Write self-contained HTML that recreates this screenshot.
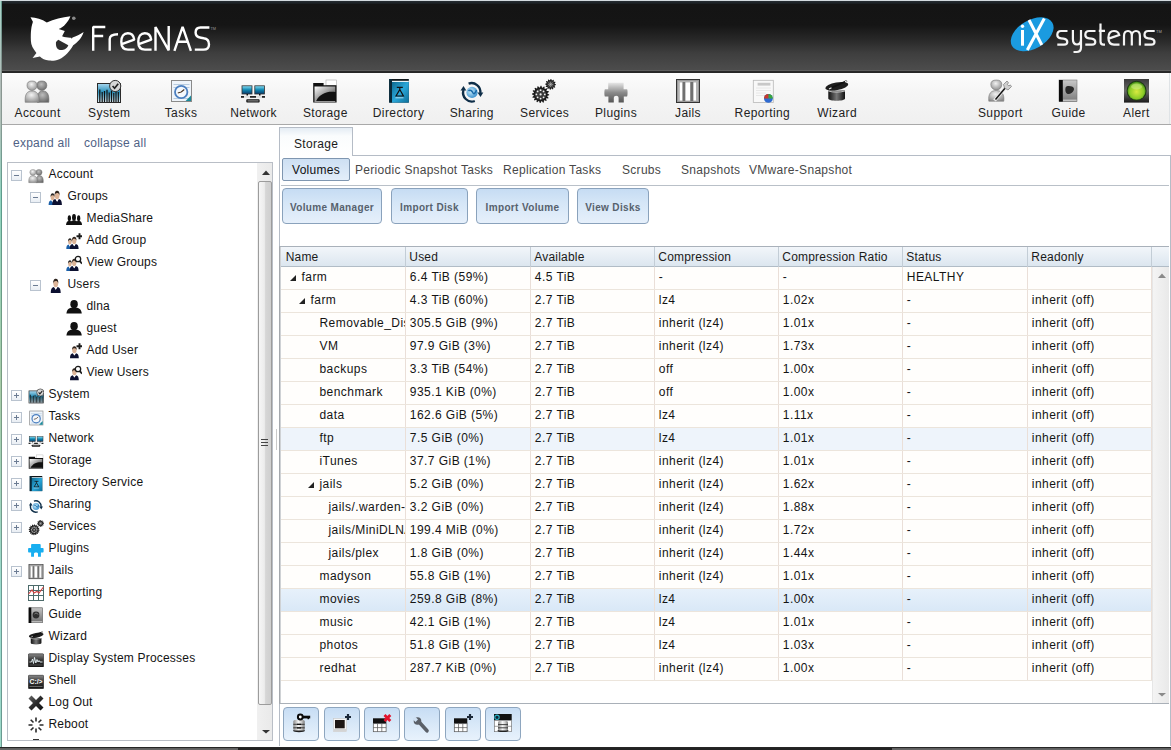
<!DOCTYPE html><html><head><meta charset="utf-8"><style>
*{margin:0;padding:0;box-sizing:border-box}
html,body{width:1171px;height:750px;overflow:hidden}
body{position:relative;background:#fff;font-family:"Liberation Sans",sans-serif;font-size:12px;color:#1a1a1a}
.a{position:absolute}
.t{position:absolute;white-space:nowrap;line-height:14px}
#lstrip{left:0;top:0;width:1px;height:750px;background:linear-gradient(#a8d4c8 0,#b0bcb8 80px,#b0c0b8 120px,#90d4c0 200px,#a8cca8 390px,#9cdcd0 600px,#9cd8c8 750px)}
#lstrip2{left:1px;top:0;width:1px;height:750px;background:linear-gradient(#6a9a90 0,#8a9490 80px,#8a9a94 120px,#5c9c8c 200px,#7a9c80 390px,#6a9c94 600px,#6a9a90 750px)}
#topline{left:0;top:0;width:1171px;height:1px;background:#d3dade}
#hdr{left:2px;top:1px;width:1169px;height:72px;background:linear-gradient(#262d33 0,#1a1e21 2.5px,#141414 3.5px,#151515 24px,#2a2a2a 40px,#3e3e3e 52px,#4a4a4a 66px,#4c4c4c 69px,#5e5e5e 69.5px,#2a2a2a 70px,#262626 72px)}
#tb{left:2px;top:73px;width:1169px;height:52px;background:linear-gradient(#fcfcfc 0,#f5f5f5 20px,#f0f0f0 51px);border-bottom:1px solid #a9a9a9}
#tbr{left:1169px;top:73px;width:1px;height:51px;background:#dfe3e6}
.tbl{top:106px;font-size:12px;letter-spacing:0.4px;color:#222;text-align:center;width:100px;margin-left:-50px}
#bstrip{left:0;top:747px;width:1171px;height:3px;background:linear-gradient(#262626 0,#262626 1px,#5c5c5c 1px,#6a6a6a 3px)}
#bstrip2{left:238px;top:748px;width:654px;height:2px;background:#222}
#rstrip{display:none}
.lnk{top:136px;color:#4f6285;letter-spacing:0.25px}
#tree{left:7px;top:162px;width:266px;height:579px;border:1px solid #b9bec6;overflow:hidden;background:#fff}
.ti{position:absolute;height:22px;white-space:nowrap}
.ti .lb{position:absolute;top:3px;line-height:14px;letter-spacing:0.2px;color:#141414}
.xb{position:absolute;top:6px;width:11px;height:11px;border:1px solid #b9c3cf;background:linear-gradient(#fff,#e9eef4)}
.xb:before{content:"";position:absolute;left:2px;top:4px;width:5px;height:1px;background:#6c7c93}
.xb.p:after{content:"";position:absolute;left:4px;top:2px;width:1px;height:5px;background:#6c7c93}
.ic{position:absolute;top:4px;width:16px;height:16px}
#tsb{left:249px;top:0px;width:16px;height:577px;background:linear-gradient(90deg,#f0f0f0,#e9e9e9)}
#thumb{left:250px;top:18px;width:14px;height:524px;border:1px solid #9c9c9c;border-radius:2px;background:linear-gradient(90deg,#f6f6f6 0,#ececec 45%,#d6d6d6 55%,#cfcfcf 100%)}
#main{left:279px;top:155px;width:892px;height:591px;border-left:1px solid #b5bcc6;border-top:1px solid #b5bcc6;border-right:1px solid #b5bcc6}
#tab{left:279px;top:127px;width:74px;height:29px;border:1px solid #b5bcc6;border-bottom:none;background:linear-gradient(#e4ecf4 0,#fafcfd 8px,#fff 28px)}
.sub{top:163px;color:#484848;letter-spacing:0.3px}
#volbtn{left:282px;top:158px;width:68px;height:23px;border:1px solid #7f96b0;border-radius:2px;background:linear-gradient(#cddff2,#e3eefa)}
.btn{position:absolute;top:188px;height:36px;border:1px solid #8aa2bc;border-radius:4px;background:linear-gradient(#c6dcf3 0,#d5e6f7 40%,#e6f0fb 100%);font-weight:bold;font-size:10px;color:#56616d;text-align:center;line-height:38px;letter-spacing:0.35px}
#grid{left:279px;top:246px;width:890px;height:458px;border-top:1px solid #a9b1ba;border-bottom:1px solid #a9b0b8;border-left:1px solid #a4a8ad}
#gl2{left:0;top:0;width:1px;height:456px;background:#cfd2d5}
#ghdr{left:1px;top:0;width:888px;height:20px;background:linear-gradient(#f2f6fa,#dce6ef);border-bottom:1px solid #b1bcc6}
.hc{position:absolute;top:0;height:20px;border-right:1px solid #c3cdd6}
.hc span{white-space:nowrap;position:absolute;left:3.3px;top:3px;line-height:14px;letter-spacing:0.2px;color:#1a1a1a}
.row{position:absolute;left:1px;width:871px;height:23px;border-bottom:1px solid #ece5dc;background:#fffefc}
.cell{position:absolute;top:0;height:22px;border-right:1px solid #eadfd8}
.cell span{white-space:nowrap;position:absolute;left:3.8px;top:3px;line-height:14px;letter-spacing:0.45px;color:#141414}
.bb{position:absolute;top:707px;width:36px;height:34px;border:1px solid #8ea6bf;border-radius:4px;background:linear-gradient(#c7ddf4 0,#d8e8f8 50%,#e8f2fc 100%)}
</style></head><body>
<div id="lstrip" class="a"></div><div id="lstrip2" class="a"></div><div id="hdr" class="a"></div><div id="topline" class="a"></div>
<svg class="a" style="left:0;top:0" width="230" height="72" viewBox="0 0 230 72">
<path fill="#fff" d="M30.5,17.2 C36,17.5 42,19 46.8,22.4 C54,19.5 62,17 70.4,16.2 C68,22 64,27 58.6,29 L64.8,31.1 L62.1,36.3 C65,37.5 68,37.8 71.1,37.7 L71.8,38.8 L72.5,37.5 C76,36.5 80,34.5 83.6,32.1 C82,38 77,43 73.2,45.3 C70,51 65,57 59.3,59.2 C55,60.8 52,60.8 48.9,60.5 C45,60 42,58.5 39.9,56.4 L32.6,58.1 L36.4,52.9 C33,49 31,45 30.9,41.1 C30.7,36 30.8,32 31.2,29.3 C31.5,26 32.5,23.5 32.9,21.7 Z"/>
<path fill="#2e2e2e" d="M56,42 L58.2,39.7 L68.3,45.3 C67,49 64,50 61,50 C57.5,50 55.5,47.5 56,42Z"/>
<circle cx="73.8" cy="18.2" r="1.8" fill="#8a8a8a"/>
<g fill="none" stroke="#fff" stroke-width="2.4" stroke-linejoin="bevel">
<path d="M93.2,50.8 V27 H105.3 M93.2,36 H103.2"/>
<path d="M109.7,50.8 V39 C109.7,35.5 112,34.2 118,34.2"/>
<path d="M121.8,44.2 L134.2,39.6 C133.6,35.2 131,33.2 127.8,33.2 C123.8,33.2 121.3,36.5 121.3,41.8 C121.3,47.3 124,49.6 128,49.6 H134.6"/>
<path d="M138.8,44.2 L151.2,39.6 C150.6,35.2 148,33.2 144.8,33.2 C140.8,33.2 138.3,36.5 138.3,41.8 C138.3,47.3 141,49.6 145,49.6 H151.6"/>
<path d="M155.5,50.8 V27 L168.7,50.3 V26"/>
<path d="M174.4,50.8 L182.6,26.8 L190.9,50.8 M177.6,41.8 H187.6"/>
<path d="M209.4,27.5 H200.5 C197,27.5 195.6,30 195.6,32.6 C195.6,35.6 197.6,37.4 201,37.8 L203.8,38.2 C207.4,38.7 209,41.4 209,44.4 C209,47.6 206.8,49.6 203.4,49.6 H194.8"/>
</g>
<text x="210.5" y="29.5" font-size="3.8" fill="#999" font-family="Liberation Sans">TM</text>
</svg>
<svg class="a" style="left:990px;top:0" width="181" height="72" viewBox="990 0 181 72">
<ellipse cx="1032.2" cy="34.3" rx="23.3" ry="14.3" transform="rotate(-30 1032.2 34.3)" fill="#1b9be0"/>
<g stroke="#fff" stroke-width="3" fill="none"><path d="M1022.5,30 V45.7"/><path d="M1029,20 L1041.8,45 M1044.3,18.5 L1027.3,50"/></g>
<circle cx="1022.5" cy="26.3" r="1.7" fill="#fff"/>
<g fill="none" stroke="#f4f4f4" stroke-width="2.2">
<path d="M1067.5,31 H1061 C1058.5,31 1057.3,33 1057.3,35 C1057.3,37 1058.8,38 1061,38.3 L1063.5,38.6 C1066,38.9 1067.3,40.5 1067.3,42 C1067.3,43.8 1066,44.6 1064,44.6 H1057.3"/>
<path d="M1072.9,30 V39 C1072.9,42.5 1074.5,44.5 1077,44.5 C1079.5,44.5 1081,42.5 1081,39 V30 M1081,39 V47.5 C1081,50.5 1079,52 1076.5,52 H1073.5"/>
<path transform="translate(28 0)" d="M1067.5,31 H1061 C1058.5,31 1057.3,33 1057.3,35 C1057.3,37 1058.8,38 1061,38.3 L1063.5,38.6 C1066,38.9 1067.3,40.5 1067.3,42 C1067.3,43.8 1066,44.6 1064,44.6 H1057.3"/>
<path d="M1100.5,23.5 V41.5 C1100.5,43.8 1101.8,44.6 1103.5,44.6 H1105 M1098.8,30.8 H1105"/>
<path d="M1108.6,38.6 L1119.2,35 C1118.6,32.3 1116.5,31 1114,31 C1110.5,31 1108.4,33.5 1108.4,37.8 C1108.4,42.5 1110.5,44.6 1114,44.6 H1119.5"/>
<path d="M1124,45.6 V36 C1124,32.5 1126,31 1128,31 C1130.5,31 1131.8,32.5 1131.8,36 V45.6 M1131.8,36 C1131.8,32.5 1134,31 1136,31 C1138.5,31 1139.9,32.5 1139.9,36 V45.6"/>
<path transform="translate(87.2 0)" d="M1067.5,31 H1061 C1058.5,31 1057.3,33 1057.3,35 C1057.3,37 1058.8,38 1061,38.3 L1063.5,38.6 C1066,38.9 1067.3,40.5 1067.3,42 C1067.3,43.8 1066,44.6 1064,44.6 H1057.3"/>
</g>
<text x="1156" y="33" font-size="4" fill="#aaa" font-family="Liberation Sans">TM</text>
</svg>
<div id="tb" class="a"></div><div id="tbr" class="a"></div>
<svg class="a" style="left:0;top:72px" width="1171" height="53" viewBox="0 72 1171 53"><defs><radialGradient id="gAL" cx="0.45" cy="0.35" r="0.7"><stop offset="0" stop-color="#f4f4f4"/><stop offset="1" stop-color="#8e8e8e"/></radialGradient>
<radialGradient id="gAR" cx="0.45" cy="0.35" r="0.7"><stop offset="0" stop-color="#bdbdbd"/><stop offset="1" stop-color="#666"/></radialGradient></defs>
<path d="M37.3,102.3 C36.6,94 38.5,91 43,91 C47,91 49.4,94 48.8,102.3 Z" fill="url(#gAR)" stroke="#6a6a6a" stroke-width="0.6"/>
<path d="M36.8,85.5 C36.8,82.3 38.5,81 41.8,81 C45.1,81 46.8,82.3 46.8,85.5 A5,5 0 0 1 36.8,85.5Z" fill="url(#gAR)" stroke="#6a6a6a" stroke-width="0.6"/>
<path d="M25.2,102.3 C24.6,94 27,91 32,91 C37,91 39.4,94 39.2,102.3 Z" fill="url(#gAL)" stroke="#777" stroke-width="0.6"/>
<path d="M27,85.5 C27,82.3 28.7,81 32,81 C35.3,81 37,82.3 37,85.5 A5,5 0 0 1 27,85.5Z" fill="url(#gAL)" stroke="#777" stroke-width="0.6"/><defs><linearGradient id="gSky" x1="0" y1="0" x2="0" y2="1"><stop offset="0" stop-color="#a9d8f0"/><stop offset="0.45" stop-color="#2a8fb8"/><stop offset="1" stop-color="#e2f0f6"/></linearGradient></defs>
<rect x="97.5" y="83.5" width="23" height="19" fill="url(#gSky)" stroke="#2a2a2a"/>
<g stroke="#111" stroke-width="1.2"><path d="M99.8,102 V89.5 M102.2,102 V92 M104.5,102 V91 M107,102 V89.8 M109.2,102 V92.5 M111.5,102 V90.5 M113.8,102 V93 M116,102 V91.5 M118.3,102 V92"/></g>
<circle cx="115.2" cy="86" r="5.6" fill="#d6d6d6" stroke="#333" stroke-width="1"/><path d="M112.6,86 L114.6,88.2 L118.2,83.8" stroke="#222" stroke-width="1.7" fill="none"/><rect x="171.5" y="80.5" width="20" height="21" fill="#eef4fa" stroke="#8a8a8a"/><path d="M173.5,84.5 H189.5 M173.5,87.5 H189.5 M173.5,98.5 H189.5" stroke="#a8c0d8" stroke-width="0.8"/>
<circle cx="181.2" cy="92" r="6.2" fill="#f4f8fc" stroke="#4b7fc0" stroke-width="1.8"/><path d="M181.2,92 L184.3,89.5 M181.2,92 L177.8,93" stroke="#4a3626" stroke-width="1.1"/>
<path d="M185.6,101 L191,95.6 V101Z" fill="#1a8a9a"/><defs><linearGradient id="gScr" x1="0" y1="0" x2="0" y2="1"><stop offset="0" stop-color="#8ae0f8"/><stop offset="0.5" stop-color="#0e86b0"/><stop offset="1" stop-color="#0a3a6a"/></linearGradient></defs>
<rect x="242" y="85.8" width="10" height="8.2" fill="url(#gScr)" stroke="#333" stroke-width="0.8"/><rect x="254.8" y="85.8" width="9.6" height="8.2" fill="url(#gScr)" stroke="#333" stroke-width="0.8"/>
<path d="M246.5,94 H248 V95.5 H246.5Z M259,94 H260.5 V95.5 H259Z" fill="#111"/>
<rect x="241" y="96" width="24" height="1.8" fill="#ddd"/><path d="M241,96.9 H244 M250,96.9 H256 M262,96.9 H265" stroke="#222" stroke-width="1.8"/>
<rect x="246.3" y="99.2" width="13.3" height="3.3" rx="0.8" fill="#111"/><rect x="247.5" y="100.3" width="11" height="1.2" fill="#888"/><defs><linearGradient id="gFold" x1="0" y1="0" x2="1" y2="1"><stop offset="0" stop-color="#fff"/><stop offset="0.5" stop-color="#9a9a9a"/><stop offset="1" stop-color="#222"/></linearGradient></defs>
<rect x="326" y="80" width="10.4" height="5.6" fill="#fff" stroke="#aaa" stroke-width="0.6"/>
<path d="M313.2,83 H323.6 V85.2 H336.6 V102.6 H313.2Z" fill="#111"/>
<path d="M314.5,86.5 H335.3 V92 C328,91 320,93 316,101.3 H314.5Z" fill="url(#gFold)"/>
<rect x="314.5" y="101" width="20.8" height="0.8" fill="#bbb"/><defs><linearGradient id="gBook" x1="0" y1="0" x2="1" y2="1"><stop offset="0" stop-color="#0e6a90"/><stop offset="0.5" stop-color="#2aa6d8"/><stop offset="1" stop-color="#0f6f98"/></linearGradient></defs>
<rect x="389.2" y="79" width="19.6" height="23.6" fill="#0b2e40"/><rect x="391" y="79.2" width="17.4" height="1.6" fill="#111"/><rect x="392" y="80.8" width="16.8" height="1.2" fill="#e8f4f8"/>
<rect x="392" y="82" width="16.8" height="20.6" fill="url(#gBook)"/><rect x="389.2" y="79" width="2.8" height="23.6" fill="#082838"/>
<path d="M396.8,87.4 H402.8 M399.8,87.4 V89.5 L396,96 H403.4 L399.8,89.5" fill="none" stroke="#111" stroke-width="1.2"/><path d="M395.5,97.8 H403.5" stroke="#cdeaf5" stroke-width="0.8"/><defs><radialGradient id="gGlobe" cx="0.4" cy="0.4" r="0.7"><stop offset="0" stop-color="#c8ecfb"/><stop offset="1" stop-color="#2a86c8"/></radialGradient></defs>
<circle cx="472" cy="92.4" r="5.6" fill="url(#gGlobe)"/><path d="M468.5,91 C470,89 472,91 473,93 C474,95 476,92 476.5,90" stroke="#1a6aa8" stroke-width="1.5" fill="none"/>
<path d="M468.6,83.6 A8.8,8.8 0 0 1 480.3,93" stroke="#0e2e48" stroke-width="2.3" fill="none"/><path d="M477.5,92.5 L480.5,97 L483.3,92.5Z" fill="#0e2e48"/>
<path d="M474.8,101 A8.8,8.8 0 0 1 463.5,90" stroke="#0e2e48" stroke-width="2.3" fill="none"/><path d="M460.5,90.5 L463.5,86 L466.3,90.5Z" fill="#0e2e48"/><path d="M549.20,94.40 L549.16,95.24 L547.47,95.77 L547.30,96.43 L548.55,97.69 L548.18,98.45 L546.42,98.29 L546.01,98.84 L546.68,100.48 L546.06,101.05 L544.49,100.22 L543.90,100.57 L543.89,102.35 L543.10,102.63 L541.97,101.27 L541.29,101.37 L540.60,103.00 L539.76,102.96 L539.23,101.27 L538.57,101.10 L537.31,102.35 L536.55,101.98 L536.71,100.22 L536.16,99.81 L534.52,100.48 L533.95,99.86 L534.78,98.29 L534.43,97.70 L532.65,97.69 L532.37,96.90 L533.73,95.77 L533.63,95.09 L532.00,94.40 L532.04,93.56 L533.73,93.03 L533.90,92.37 L532.65,91.11 L533.02,90.35 L534.78,90.51 L535.19,89.96 L534.52,88.32 L535.14,87.75 L536.71,88.58 L537.30,88.23 L537.31,86.45 L538.10,86.17 L539.23,87.53 L539.91,87.43 L540.60,85.80 L541.44,85.84 L541.97,87.53 L542.63,87.70 L543.89,86.45 L544.65,86.82 L544.49,88.58 L545.04,88.99 L546.68,88.32 L547.25,88.94 L546.42,90.51 L546.77,91.10 L548.55,91.11 L548.83,91.90 L547.47,93.03 L547.57,93.71Z" fill="#1a1a1a"/><circle cx="540.6" cy="94.4" r="5.6" fill="#3a3a3a"/><circle cx="540.6" cy="94.4" r="1.1" fill="#eee"/><circle cx="544.80" cy="94.40" r="0.9" fill="#eee"/><circle cx="543.57" cy="97.37" r="0.9" fill="#eee"/><circle cx="540.60" cy="98.60" r="0.9" fill="#eee"/><circle cx="537.63" cy="97.37" r="0.9" fill="#eee"/><circle cx="536.40" cy="94.41" r="0.9" fill="#eee"/><circle cx="537.62" cy="91.44" r="0.9" fill="#eee"/><circle cx="540.59" cy="90.20" r="0.9" fill="#eee"/><circle cx="543.56" cy="91.42" r="0.9" fill="#eee"/><path d="M556.00,84.40 L555.95,85.10 L554.66,85.49 L554.48,86.01 L555.28,87.10 L554.88,87.69 L553.57,87.37 L553.16,87.73 L553.30,89.08 L552.67,89.39 L551.69,88.46 L551.15,88.56 L550.60,89.80 L549.90,89.75 L549.51,88.46 L548.99,88.28 L547.90,89.08 L547.31,88.68 L547.63,87.37 L547.27,86.96 L545.92,87.10 L545.61,86.47 L546.54,85.49 L546.44,84.95 L545.20,84.40 L545.25,83.70 L546.54,83.31 L546.72,82.79 L545.92,81.70 L546.32,81.11 L547.63,81.43 L548.04,81.07 L547.90,79.72 L548.53,79.41 L549.51,80.34 L550.05,80.24 L550.60,79.00 L551.30,79.05 L551.69,80.34 L552.21,80.52 L553.30,79.72 L553.89,80.12 L553.57,81.43 L553.93,81.84 L555.28,81.70 L555.59,82.33 L554.66,83.31 L554.76,83.85Z" fill="#1a1a1a"/><circle cx="550.6" cy="84.4" r="3.4" fill="#3a3a3a"/><path d="M548,84.4 H553.2 M550.6,81.8 V87 M548.8,82.6 L552.4,86.2 M548.8,86.2 L552.4,82.6" stroke="#bbb" stroke-width="0.6"/><defs><linearGradient id="gPlug" x1="0" y1="0" x2="0" y2="1"><stop offset="0" stop-color="#e6e6e6"/><stop offset="0.5" stop-color="#8a8a8a"/><stop offset="1" stop-color="#555"/></linearGradient></defs>
<path d="M608.2,82.8 H623.6 V89.2 H627 C627.8,89.2 627.8,96.4 627,96.4 H623.8 V102.6 H618.6 V98 C618.6,95 613.8,95 613.8,98 V102.6 H608.4 V96.4 H605 C604.2,96.4 604.2,89.2 605,89.2 H608.2Z" fill="url(#gPlug)"/><rect x="676.5" y="79.5" width="23" height="23" fill="#9a9a9a" stroke="#333"/><rect x="678" y="81" width="20" height="20" fill="#b4b4b4"/>
<g fill="#fff"><rect x="679.8" y="82.5" width="2.6" height="18"/><rect x="685.4" y="82.5" width="4.8" height="18"/><rect x="693.4" y="82.5" width="2.6" height="18"/></g>
<g fill="#707070"><rect x="682.6" y="82" width="2.6" height="19"/><rect x="690.4" y="82" width="2.8" height="19"/></g><rect x="753.3" y="80.3" width="20" height="22.2" fill="#f8f8f8" stroke="#b8b8b8" stroke-width="0.8"/><rect x="757.6" y="82.8" width="12.8" height="2.8" fill="#c8c8c8"/>
<path d="M756,88 H771 M756,90.5 H771 M756,93 H766 M756,95.5 H764" stroke="#e2e2e2" stroke-width="0.8"/>
<circle cx="768.4" cy="98.4" r="4.4" fill="#2f6ad0"/><path d="M768.4,98.4 H772.8 A4.4,4.4 0 0 0 768.4,94Z" fill="#3aa63a"/><path d="M768.4,98.4 V94 A4.4,4.4 0 0 0 764,98.4Z" fill="#c83a2a"/><defs><linearGradient id="gHat" x1="0" x2="1"><stop offset="0" stop-color="#111"/><stop offset="0.5" stop-color="#777"/><stop offset="1" stop-color="#111"/></linearGradient></defs>
<path d="M828.3,90.5 V98.5 C828.3,101.5 845,101.5 845,98.5 V90.5Z" fill="url(#gHat)"/><path d="M828.3,91 C833,92.5 840,92.5 845,91" stroke="#ccc" stroke-width="0.9" fill="none"/>
<ellipse cx="836.8" cy="86.3" rx="11.6" ry="3.8" transform="rotate(-10 836.8 86.3)" fill="#1e1e1e"/>
<path d="M829,89 L847,80.8" stroke="#111" stroke-width="1.8"/><path d="M829,89 L831.5,87.8 M845,81.7 L847.2,80.7" stroke="#eee" stroke-width="1.2"/><defs><radialGradient id="gSup" cx="0.45" cy="0.35" r="0.7"><stop offset="0" stop-color="#f2f2f2"/><stop offset="1" stop-color="#8a8a8a"/></radialGradient></defs>
<path d="M988.8,101.2 C988,93.5 991,90.5 996.3,90.5 C1001.5,90.5 1004.5,93.5 1003.8,101.2Z" fill="url(#gSup)" stroke="#777" stroke-width="0.6"/>
<path d="M990.8,84.5 C990.8,81.3 992.8,80 996.3,80 C999.8,80 1001.8,81.3 1001.8,84.5 A5.5,5.5 0 0 1 990.8,84.5Z" fill="url(#gSup)" stroke="#777" stroke-width="0.6"/>
<path d="M994.5,100.5 L1006,87" stroke="#e8e8e8" stroke-width="3.4"/><path d="M995.5,99.5 L1005,88.2" stroke="#111" stroke-width="1.4"/>
<path d="M1004.5,88 L1003.5,84.5 L1007,81 L1008.5,82.8 L1007.3,84.5 L1009,86 L1010.2,84.8 L1011.5,86.5 L1008,90Z" fill="#cfcfcf" stroke="#666" stroke-width="0.6"/><defs><linearGradient id="gGd" x1="0" y1="0" x2="0" y2="1"><stop offset="0" stop-color="#c8c8c8"/><stop offset="1" stop-color="#7a7a7a"/></linearGradient></defs>
<rect x="1059" y="80" width="18" height="21.6" fill="url(#gGd)" stroke="#777" stroke-width="0.6"/><rect x="1059" y="80" width="3.8" height="21.6" fill="#0a0a0a"/>
<path d="M1063,100.2 H1076.6" stroke="#eee" stroke-width="0.9"/>
<path d="M1065.6,87.5 C1066.5,85.5 1070,85.8 1072,86.5 C1074,87 1074.5,89 1073.5,90.8 C1072.5,93 1070,94.5 1067.6,94 C1065.5,93.3 1065,90 1065.6,87.5Z" fill="#2a2a2a"/><defs><linearGradient id="gAb" x1="0" y1="0" x2="0" y2="1"><stop offset="0" stop-color="#3a3a3a"/><stop offset="0.5" stop-color="#6a6a6a"/><stop offset="1" stop-color="#1a1a1a"/></linearGradient>
<radialGradient id="gAg" cx="0.5" cy="0.55" r="0.55"><stop offset="0" stop-color="#d8ea40"/><stop offset="0.7" stop-color="#8ccc28"/><stop offset="1" stop-color="#3e8a18"/></radialGradient></defs>
<rect x="1124" y="79" width="25" height="23.6" fill="url(#gAb)"/><circle cx="1136.6" cy="90.8" r="10" fill="#1e3a10"/><circle cx="1136.6" cy="90.8" r="9" fill="url(#gAg)"/><ellipse cx="1136.6" cy="86.5" rx="5.5" ry="3" fill="#d8f0a0" opacity="0.45"/></svg>
<div class="t tbl" style="left:37.6px">Account</div>
<div class="t tbl" style="left:109.3px">System</div>
<div class="t tbl" style="left:181px">Tasks</div>
<div class="t tbl" style="left:253.6px">Network</div>
<div class="t tbl" style="left:325.3px">Storage</div>
<div class="t tbl" style="left:398.6px">Directory</div>
<div class="t tbl" style="left:471.8px">Sharing</div>
<div class="t tbl" style="left:544.6px">Services</div>
<div class="t tbl" style="left:616px">Plugins</div>
<div class="t tbl" style="left:688px">Jails</div>
<div class="t tbl" style="left:762.4px">Reporting</div>
<div class="t tbl" style="left:837.2px">Wizard</div>
<div class="t tbl" style="left:1000.4px">Support</div>
<div class="t tbl" style="left:1068.6px">Guide</div>
<div class="t tbl" style="left:1136.4px">Alert</div>
<div id="rstrip" class="a"></div>
<div class="t lnk" style="left:13px">expand all</div><div class="t lnk" style="left:84px">collapse all</div>
<div id="tree" class="a">
<div class="ti" style="left:0;top:1px;width:248px">
<div class="xb" style="left:3px"></div>
<svg class="ic" style="left:20px;" width="16" height="16" viewBox="24 79 26 25" preserveAspectRatio="xMidYMid meet"><defs><radialGradient id="gAL" cx="0.45" cy="0.35" r="0.7"><stop offset="0" stop-color="#f4f4f4"/><stop offset="1" stop-color="#8e8e8e"/></radialGradient>
<radialGradient id="gAR" cx="0.45" cy="0.35" r="0.7"><stop offset="0" stop-color="#bdbdbd"/><stop offset="1" stop-color="#666"/></radialGradient></defs>
<path d="M37.3,102.3 C36.6,94 38.5,91 43,91 C47,91 49.4,94 48.8,102.3 Z" fill="url(#gAR)" stroke="#6a6a6a" stroke-width="0.6"/>
<path d="M36.8,85.5 C36.8,82.3 38.5,81 41.8,81 C45.1,81 46.8,82.3 46.8,85.5 A5,5 0 0 1 36.8,85.5Z" fill="url(#gAR)" stroke="#6a6a6a" stroke-width="0.6"/>
<path d="M25.2,102.3 C24.6,94 27,91 32,91 C37,91 39.4,94 39.2,102.3 Z" fill="url(#gAL)" stroke="#777" stroke-width="0.6"/>
<path d="M27,85.5 C27,82.3 28.7,81 32,81 C35.3,81 37,82.3 37,85.5 A5,5 0 0 1 27,85.5Z" fill="url(#gAL)" stroke="#777" stroke-width="0.6"/></svg>
<span class="lb" style="left:40.5px">Account</span>
</div>
<div class="ti" style="left:0;top:23px;width:248px">
<div class="xb" style="left:22px"></div>
<svg class="ic" style="left:39px;top:3px" width="16" height="16" viewBox="0 0 16 16" preserveAspectRatio="xMidYMid meet"><g transform="translate(1.6 4) scale(0.5 0.76)"><path d="M0,16 C0,11.5 2,10 5,9.5 L8,12.5 L11,9.5 C14,10 16,11.5 16,16Z" fill="#1b5fa8"/><path d="M6.3,9.8 L8,12.5 L9.7,9.8Z" fill="#fff"/><ellipse cx="8" cy="5.3" rx="3.9" ry="4.3" fill="#dcb498"/><path d="M4,5.5 C3.6,1.6 5.8,0.3 8,0.3 C10.6,0.3 12.5,1.8 12,5.5 C11.2,3.3 10,2.8 8,2.8 C6,2.8 4.8,3.6 4,5.5Z" fill="#2a2a2a"/></g><g transform="translate(5.3 1.5) scale(0.6 0.9)"><path d="M0,16 C0,11.5 2,10 5,9.5 L8,12.5 L11,9.5 C14,10 16,11.5 16,16Z" fill="#0c1030"/><path d="M6.3,9.8 L8,12.5 L9.7,9.8Z" fill="#fff"/><ellipse cx="8" cy="5.3" rx="3.9" ry="4.3" fill="#dcb498"/><path d="M4,5.5 C3.6,1.6 5.8,0.3 8,0.3 C10.6,0.3 12.5,1.8 12,5.5 C11.2,3.3 10,2.8 8,2.8 C6,2.8 4.8,3.6 4,5.5Z" fill="#2e241e"/></g></svg>
<span class="lb" style="left:59.5px">Groups</span>
</div>
<div class="ti" style="left:0;top:45px;width:248px">
<svg class="ic" style="left:58px;top:3px" width="16" height="16" viewBox="0 0 16 16" preserveAspectRatio="xMidYMid meet"><g transform="translate(0 4.2) scale(0.42 0.62)"><ellipse cx="8" cy="5" rx="3.9" ry="4.8" fill="#111"/><path d="M0,16 C0.5,11 3,9.5 6,9.3 H10 C13,9.5 15.5,11 16,16Z" fill="#111"/></g><g transform="translate(9.3 4.2) scale(0.42 0.62)"><ellipse cx="8" cy="5" rx="3.9" ry="4.8" fill="#111"/><path d="M0,16 C0.5,11 3,9.5 6,9.3 H10 C13,9.5 15.5,11 16,16Z" fill="#111"/></g><g transform="translate(4 2.9) scale(0.5 0.7)"><ellipse cx="8" cy="5" rx="3.9" ry="4.8" fill="#111"/><path d="M0,16 C0.5,11 3,9.5 6,9.3 H10 C13,9.5 15.5,11 16,16Z" fill="#111"/></g></svg>
<span class="lb" style="left:78.5px">MediaShare</span>
</div>
<div class="ti" style="left:0;top:67px;width:248px">
<svg class="ic" style="left:58px;top:3px" width="16" height="16" viewBox="0 0 16 16" preserveAspectRatio="xMidYMid meet"><g transform="translate(0.3 5) scale(0.45 0.68)"><path d="M0,16 C0,11.5 2,10 5,9.5 L8,12.5 L11,9.5 C14,10 16,11.5 16,16Z" fill="#1b5fa8"/><path d="M6.3,9.8 L8,12.5 L9.7,9.8Z" fill="#fff"/><ellipse cx="8" cy="5.3" rx="3.9" ry="4.3" fill="#dcb498"/><path d="M4,5.5 C3.6,1.6 5.8,0.3 8,0.3 C10.6,0.3 12.5,1.8 12,5.5 C11.2,3.3 10,2.8 8,2.8 C6,2.8 4.8,3.6 4,5.5Z" fill="#2a2a2a"/></g><g transform="translate(3.8 3.5) scale(0.55 0.78)"><path d="M0,16 C0,11.5 2,10 5,9.5 L8,12.5 L11,9.5 C14,10 16,11.5 16,16Z" fill="#0c1030"/><path d="M6.3,9.8 L8,12.5 L9.7,9.8Z" fill="#fff"/><ellipse cx="8" cy="5.3" rx="3.9" ry="4.3" fill="#dcb498"/><path d="M4,5.5 C3.6,1.6 5.8,0.3 8,0.3 C10.6,0.3 12.5,1.8 12,5.5 C11.2,3.3 10,2.8 8,2.8 C6,2.8 4.8,3.6 4,5.5Z" fill="#2e241e"/></g><path d="M13.5,0.3 V6.3 M10.5,3.3 H16.5" stroke="#1a1a1a" stroke-width="1.9"/></svg>
<span class="lb" style="left:78.5px">Add Group</span>
</div>
<div class="ti" style="left:0;top:89px;width:248px">
<svg class="ic" style="left:58px;top:3px" width="16" height="16" viewBox="0 0 16 16" preserveAspectRatio="xMidYMid meet"><g transform="translate(0.3 5) scale(0.45 0.68)"><path d="M0,16 C0,11.5 2,10 5,9.5 L8,12.5 L11,9.5 C14,10 16,11.5 16,16Z" fill="#1b5fa8"/><path d="M6.3,9.8 L8,12.5 L9.7,9.8Z" fill="#fff"/><ellipse cx="8" cy="5.3" rx="3.9" ry="4.3" fill="#dcb498"/><path d="M4,5.5 C3.6,1.6 5.8,0.3 8,0.3 C10.6,0.3 12.5,1.8 12,5.5 C11.2,3.3 10,2.8 8,2.8 C6,2.8 4.8,3.6 4,5.5Z" fill="#2a2a2a"/></g><g transform="translate(3.8 3.5) scale(0.55 0.78)"><path d="M0,16 C0,11.5 2,10 5,9.5 L8,12.5 L11,9.5 C14,10 16,11.5 16,16Z" fill="#0c1030"/><path d="M6.3,9.8 L8,12.5 L9.7,9.8Z" fill="#fff"/><ellipse cx="8" cy="5.3" rx="3.9" ry="4.3" fill="#dcb498"/><path d="M4,5.5 C3.6,1.6 5.8,0.3 8,0.3 C10.6,0.3 12.5,1.8 12,5.5 C11.2,3.3 10,2.8 8,2.8 C6,2.8 4.8,3.6 4,5.5Z" fill="#2e241e"/></g><circle cx="12" cy="4" r="2.7" fill="#fff" stroke="#1a1a1a" stroke-width="1.3"/><path d="M13.9,6.1 L16,8.6" stroke="#1a1a1a" stroke-width="1.7"/></svg>
<span class="lb" style="left:78.5px">View Groups</span>
</div>
<div class="ti" style="left:0;top:111px;width:248px">
<div class="xb" style="left:22px"></div>
<svg class="ic" style="left:39px;top:3px" width="16" height="16" viewBox="0 0 16 16" preserveAspectRatio="xMidYMid meet"><g transform="translate(3.8 1.5) scale(0.62 0.9)"><path d="M0,16 C0,11.5 2,10 5,9.5 L8,12.5 L11,9.5 C14,10 16,11.5 16,16Z" fill="#0c1030"/><path d="M6.3,9.8 L8,12.5 L9.7,9.8Z" fill="#fff"/><ellipse cx="8" cy="5.3" rx="3.9" ry="4.3" fill="#dcb498"/><path d="M4,5.5 C3.6,1.6 5.8,0.3 8,0.3 C10.6,0.3 12.5,1.8 12,5.5 C11.2,3.3 10,2.8 8,2.8 C6,2.8 4.8,3.6 4,5.5Z" fill="#2e241e"/></g></svg>
<span class="lb" style="left:59.5px">Users</span>
</div>
<div class="ti" style="left:0;top:133px;width:248px">
<svg class="ic" style="left:58px;top:3px" width="16" height="16" viewBox="0 0 16 16" preserveAspectRatio="xMidYMid meet"><g transform="translate(0.4 0.9) scale(0.96 0.85)"><ellipse cx="8" cy="5" rx="3.9" ry="4.8" fill="#111"/><path d="M0,16 C0.5,11 3,9.5 6,9.3 H10 C13,9.5 15.5,11 16,16Z" fill="#111"/></g></svg>
<span class="lb" style="left:78.5px">dlna</span>
</div>
<div class="ti" style="left:0;top:155px;width:248px">
<svg class="ic" style="left:58px;top:3px" width="16" height="16" viewBox="0 0 16 16" preserveAspectRatio="xMidYMid meet"><g transform="translate(0.4 0.9) scale(0.96 0.85)"><ellipse cx="8" cy="5" rx="3.9" ry="4.8" fill="#111"/><path d="M0,16 C0.5,11 3,9.5 6,9.3 H10 C13,9.5 15.5,11 16,16Z" fill="#111"/></g></svg>
<span class="lb" style="left:78.5px">guest</span>
</div>
<div class="ti" style="left:0;top:177px;width:248px">
<svg class="ic" style="left:58px;top:3px" width="16" height="16" viewBox="0 0 16 16" preserveAspectRatio="xMidYMid meet"><g transform="translate(4 3) scale(0.55 0.76)"><path d="M0,16 C0,11.5 2,10 5,9.5 L8,12.5 L11,9.5 C14,10 16,11.5 16,16Z" fill="#0c1030"/><path d="M6.3,9.8 L8,12.5 L9.7,9.8Z" fill="#fff"/><ellipse cx="8" cy="5.3" rx="3.9" ry="4.3" fill="#dcb498"/><path d="M4,5.5 C3.6,1.6 5.8,0.3 8,0.3 C10.6,0.3 12.5,1.8 12,5.5 C11.2,3.3 10,2.8 8,2.8 C6,2.8 4.8,3.6 4,5.5Z" fill="#2e241e"/></g><path d="M13.5,0.3 V6.3 M10.5,3.3 H16.5" stroke="#1a1a1a" stroke-width="1.9"/></svg>
<span class="lb" style="left:78.5px">Add User</span>
</div>
<div class="ti" style="left:0;top:199px;width:248px">
<svg class="ic" style="left:58px;top:3px" width="16" height="16" viewBox="0 0 16 16" preserveAspectRatio="xMidYMid meet"><g transform="translate(4 3) scale(0.55 0.76)"><path d="M0,16 C0,11.5 2,10 5,9.5 L8,12.5 L11,9.5 C14,10 16,11.5 16,16Z" fill="#0c1030"/><path d="M6.3,9.8 L8,12.5 L9.7,9.8Z" fill="#fff"/><ellipse cx="8" cy="5.3" rx="3.9" ry="4.3" fill="#dcb498"/><path d="M4,5.5 C3.6,1.6 5.8,0.3 8,0.3 C10.6,0.3 12.5,1.8 12,5.5 C11.2,3.3 10,2.8 8,2.8 C6,2.8 4.8,3.6 4,5.5Z" fill="#2e241e"/></g><circle cx="12" cy="4" r="2.7" fill="#fff" stroke="#1a1a1a" stroke-width="1.3"/><path d="M13.9,6.1 L16,8.6" stroke="#1a1a1a" stroke-width="1.7"/></svg>
<span class="lb" style="left:78.5px">View Users</span>
</div>
<div class="ti" style="left:0;top:221px;width:248px">
<div class="xb p" style="left:3px"></div>
<svg class="ic" style="left:20px;" width="16" height="16" viewBox="96 79 25 25" preserveAspectRatio="xMidYMid meet"><defs><linearGradient id="gSky" x1="0" y1="0" x2="0" y2="1"><stop offset="0" stop-color="#a9d8f0"/><stop offset="0.45" stop-color="#2a8fb8"/><stop offset="1" stop-color="#e2f0f6"/></linearGradient></defs>
<rect x="97.5" y="83.5" width="23" height="19" fill="url(#gSky)" stroke="#2a2a2a"/>
<g stroke="#111" stroke-width="1.2"><path d="M99.8,102 V89.5 M102.2,102 V92 M104.5,102 V91 M107,102 V89.8 M109.2,102 V92.5 M111.5,102 V90.5 M113.8,102 V93 M116,102 V91.5 M118.3,102 V92"/></g>
<circle cx="115.2" cy="86" r="5.6" fill="#d6d6d6" stroke="#333" stroke-width="1"/><path d="M112.6,86 L114.6,88.2 L118.2,83.8" stroke="#222" stroke-width="1.7" fill="none"/></svg>
<span class="lb" style="left:40.5px">System</span>
</div>
<div class="ti" style="left:0;top:243px;width:248px">
<div class="xb p" style="left:3px"></div>
<svg class="ic" style="left:20px;" width="16" height="16" viewBox="170 79 22 24" preserveAspectRatio="xMidYMid meet"><rect x="171.5" y="80.5" width="20" height="21" fill="#eef4fa" stroke="#8a8a8a"/><path d="M173.5,84.5 H189.5 M173.5,87.5 H189.5 M173.5,98.5 H189.5" stroke="#a8c0d8" stroke-width="0.8"/>
<circle cx="181.2" cy="92" r="6.2" fill="#f4f8fc" stroke="#4b7fc0" stroke-width="1.8"/><path d="M181.2,92 L184.3,89.5 M181.2,92 L177.8,93" stroke="#4a3626" stroke-width="1.1"/>
<path d="M185.6,101 L191,95.6 V101Z" fill="#1a8a9a"/></svg>
<span class="lb" style="left:40.5px">Tasks</span>
</div>
<div class="ti" style="left:0;top:265px;width:248px">
<div class="xb p" style="left:3px"></div>
<svg class="ic" style="left:20px;" width="16" height="16" viewBox="240 79 26 25" preserveAspectRatio="xMidYMid meet"><defs><linearGradient id="gScr" x1="0" y1="0" x2="0" y2="1"><stop offset="0" stop-color="#8ae0f8"/><stop offset="0.5" stop-color="#0e86b0"/><stop offset="1" stop-color="#0a3a6a"/></linearGradient></defs>
<rect x="242" y="85.8" width="10" height="8.2" fill="url(#gScr)" stroke="#333" stroke-width="0.8"/><rect x="254.8" y="85.8" width="9.6" height="8.2" fill="url(#gScr)" stroke="#333" stroke-width="0.8"/>
<path d="M246.5,94 H248 V95.5 H246.5Z M259,94 H260.5 V95.5 H259Z" fill="#111"/>
<rect x="241" y="96" width="24" height="1.8" fill="#ddd"/><path d="M241,96.9 H244 M250,96.9 H256 M262,96.9 H265" stroke="#222" stroke-width="1.8"/>
<rect x="246.3" y="99.2" width="13.3" height="3.3" rx="0.8" fill="#111"/><rect x="247.5" y="100.3" width="11" height="1.2" fill="#888"/></svg>
<span class="lb" style="left:40.5px">Network</span>
</div>
<div class="ti" style="left:0;top:287px;width:248px">
<div class="xb p" style="left:3px"></div>
<svg class="ic" style="left:20px;" width="16" height="16" viewBox="312 79 26 25" preserveAspectRatio="xMidYMid meet"><defs><linearGradient id="gFold" x1="0" y1="0" x2="1" y2="1"><stop offset="0" stop-color="#fff"/><stop offset="0.5" stop-color="#9a9a9a"/><stop offset="1" stop-color="#222"/></linearGradient></defs>
<rect x="326" y="80" width="10.4" height="5.6" fill="#fff" stroke="#aaa" stroke-width="0.6"/>
<path d="M313.2,83 H323.6 V85.2 H336.6 V102.6 H313.2Z" fill="#111"/>
<path d="M314.5,86.5 H335.3 V92 C328,91 320,93 316,101.3 H314.5Z" fill="url(#gFold)"/>
<rect x="314.5" y="101" width="20.8" height="0.8" fill="#bbb"/></svg>
<span class="lb" style="left:40.5px">Storage</span>
</div>
<div class="ti" style="left:0;top:309px;width:248px">
<div class="xb p" style="left:3px"></div>
<svg class="ic" style="left:20px;" width="16" height="16" viewBox="388 79 22 25" preserveAspectRatio="xMidYMid meet"><defs><linearGradient id="gBook" x1="0" y1="0" x2="1" y2="1"><stop offset="0" stop-color="#0e6a90"/><stop offset="0.5" stop-color="#2aa6d8"/><stop offset="1" stop-color="#0f6f98"/></linearGradient></defs>
<rect x="389.2" y="79" width="19.6" height="23.6" fill="#0b2e40"/><rect x="391" y="79.2" width="17.4" height="1.6" fill="#111"/><rect x="392" y="80.8" width="16.8" height="1.2" fill="#e8f4f8"/>
<rect x="392" y="82" width="16.8" height="20.6" fill="url(#gBook)"/><rect x="389.2" y="79" width="2.8" height="23.6" fill="#082838"/>
<path d="M396.8,87.4 H402.8 M399.8,87.4 V89.5 L396,96 H403.4 L399.8,89.5" fill="none" stroke="#111" stroke-width="1.2"/><path d="M395.5,97.8 H403.5" stroke="#cdeaf5" stroke-width="0.8"/></svg>
<span class="lb" style="left:40.5px">Directory Service</span>
</div>
<div class="ti" style="left:0;top:331px;width:248px">
<div class="xb p" style="left:3px"></div>
<svg class="ic" style="left:20px;" width="16" height="16" viewBox="459 79 26 25" preserveAspectRatio="xMidYMid meet"><defs><radialGradient id="gGlobe" cx="0.4" cy="0.4" r="0.7"><stop offset="0" stop-color="#c8ecfb"/><stop offset="1" stop-color="#2a86c8"/></radialGradient></defs>
<circle cx="472" cy="92.4" r="5.6" fill="url(#gGlobe)"/><path d="M468.5,91 C470,89 472,91 473,93 C474,95 476,92 476.5,90" stroke="#1a6aa8" stroke-width="1.5" fill="none"/>
<path d="M468.6,83.6 A8.8,8.8 0 0 1 480.3,93" stroke="#0e2e48" stroke-width="2.3" fill="none"/><path d="M477.5,92.5 L480.5,97 L483.3,92.5Z" fill="#0e2e48"/>
<path d="M474.8,101 A8.8,8.8 0 0 1 463.5,90" stroke="#0e2e48" stroke-width="2.3" fill="none"/><path d="M460.5,90.5 L463.5,86 L466.3,90.5Z" fill="#0e2e48"/></svg>
<span class="lb" style="left:40.5px">Sharing</span>
</div>
<div class="ti" style="left:0;top:353px;width:248px">
<div class="xb p" style="left:3px"></div>
<svg class="ic" style="left:20px;" width="16" height="16" viewBox="531 79 25 25" preserveAspectRatio="xMidYMid meet"><path d="M549.20,94.40 L549.16,95.24 L547.47,95.77 L547.30,96.43 L548.55,97.69 L548.18,98.45 L546.42,98.29 L546.01,98.84 L546.68,100.48 L546.06,101.05 L544.49,100.22 L543.90,100.57 L543.89,102.35 L543.10,102.63 L541.97,101.27 L541.29,101.37 L540.60,103.00 L539.76,102.96 L539.23,101.27 L538.57,101.10 L537.31,102.35 L536.55,101.98 L536.71,100.22 L536.16,99.81 L534.52,100.48 L533.95,99.86 L534.78,98.29 L534.43,97.70 L532.65,97.69 L532.37,96.90 L533.73,95.77 L533.63,95.09 L532.00,94.40 L532.04,93.56 L533.73,93.03 L533.90,92.37 L532.65,91.11 L533.02,90.35 L534.78,90.51 L535.19,89.96 L534.52,88.32 L535.14,87.75 L536.71,88.58 L537.30,88.23 L537.31,86.45 L538.10,86.17 L539.23,87.53 L539.91,87.43 L540.60,85.80 L541.44,85.84 L541.97,87.53 L542.63,87.70 L543.89,86.45 L544.65,86.82 L544.49,88.58 L545.04,88.99 L546.68,88.32 L547.25,88.94 L546.42,90.51 L546.77,91.10 L548.55,91.11 L548.83,91.90 L547.47,93.03 L547.57,93.71Z" fill="#1a1a1a"/><circle cx="540.6" cy="94.4" r="5.6" fill="#3a3a3a"/><circle cx="540.6" cy="94.4" r="1.1" fill="#eee"/><circle cx="544.80" cy="94.40" r="0.9" fill="#eee"/><circle cx="543.57" cy="97.37" r="0.9" fill="#eee"/><circle cx="540.60" cy="98.60" r="0.9" fill="#eee"/><circle cx="537.63" cy="97.37" r="0.9" fill="#eee"/><circle cx="536.40" cy="94.41" r="0.9" fill="#eee"/><circle cx="537.62" cy="91.44" r="0.9" fill="#eee"/><circle cx="540.59" cy="90.20" r="0.9" fill="#eee"/><circle cx="543.56" cy="91.42" r="0.9" fill="#eee"/><path d="M556.00,84.40 L555.95,85.10 L554.66,85.49 L554.48,86.01 L555.28,87.10 L554.88,87.69 L553.57,87.37 L553.16,87.73 L553.30,89.08 L552.67,89.39 L551.69,88.46 L551.15,88.56 L550.60,89.80 L549.90,89.75 L549.51,88.46 L548.99,88.28 L547.90,89.08 L547.31,88.68 L547.63,87.37 L547.27,86.96 L545.92,87.10 L545.61,86.47 L546.54,85.49 L546.44,84.95 L545.20,84.40 L545.25,83.70 L546.54,83.31 L546.72,82.79 L545.92,81.70 L546.32,81.11 L547.63,81.43 L548.04,81.07 L547.90,79.72 L548.53,79.41 L549.51,80.34 L550.05,80.24 L550.60,79.00 L551.30,79.05 L551.69,80.34 L552.21,80.52 L553.30,79.72 L553.89,80.12 L553.57,81.43 L553.93,81.84 L555.28,81.70 L555.59,82.33 L554.66,83.31 L554.76,83.85Z" fill="#1a1a1a"/><circle cx="550.6" cy="84.4" r="3.4" fill="#3a3a3a"/><path d="M548,84.4 H553.2 M550.6,81.8 V87 M548.8,82.6 L552.4,86.2 M548.8,86.2 L552.4,82.6" stroke="#bbb" stroke-width="0.6"/></svg>
<span class="lb" style="left:40.5px">Services</span>
</div>
<div class="ti" style="left:0;top:375px;width:248px">
<svg class="ic" style="left:20px;top:3px" width="16" height="16" viewBox="0 0 16 16" preserveAspectRatio="xMidYMid meet"><path d="M3.1,4 C3.1,3.3 3.6,3 4.3,3 H11.5 C12.2,3 12.7,3.3 12.7,4 V7 H14.6 C15.3,7 15.6,7.5 15.6,8 V10.6 C15.6,11.2 15.2,11.6 14.6,11.6 H12.9 V15.7 H10 V12.5 C10,11 6,11 6,12.5 V15.7 H3.1 V11.6 H1.1 C0.5,11.6 0.1,11.2 0.1,10.6 V8 C0.1,7.5 0.5,7 1.1,7 H3.1Z" fill="#18aef0"/></svg>
<span class="lb" style="left:40.5px">Plugins</span>
</div>
<div class="ti" style="left:0;top:397px;width:248px">
<div class="xb p" style="left:3px"></div>
<svg class="ic" style="left:20px;" width="16" height="16" viewBox="675 79 26 25" preserveAspectRatio="xMidYMid meet"><rect x="676.5" y="79.5" width="23" height="23" fill="#9a9a9a" stroke="#333"/><rect x="678" y="81" width="20" height="20" fill="#b4b4b4"/>
<g fill="#fff"><rect x="679.8" y="82.5" width="2.6" height="18"/><rect x="685.4" y="82.5" width="4.8" height="18"/><rect x="693.4" y="82.5" width="2.6" height="18"/></g>
<g fill="#707070"><rect x="682.6" y="82" width="2.6" height="19"/><rect x="690.4" y="82" width="2.8" height="19"/></g></svg>
<span class="lb" style="left:40.5px">Jails</span>
</div>
<div class="ti" style="left:0;top:419px;width:248px">
<svg class="ic" style="left:20px;top:3px" width="16" height="16" viewBox="0 0 16 16" preserveAspectRatio="xMidYMid meet"><rect x="0.5" y="0.5" width="15" height="15" fill="#fff" stroke="#4d6b6b"/><path d="M5.5,0.5 V15.5 M10.5,0.5 V15.5 M0.5,5.5 H15.5 M0.5,10.5 H15.5" stroke="#4d6b6b" stroke-width="1"/><path d="M0.5,9 L4,5 L6,8 L9,6.5 L11,8 L15.5,2" stroke="#d04040" stroke-width="1.1" fill="none"/></svg>
<span class="lb" style="left:40.5px">Reporting</span>
</div>
<div class="ti" style="left:0;top:441px;width:248px">
<svg class="ic" style="left:20px;top:3px" width="16" height="16" viewBox="0 0 16 16" preserveAspectRatio="xMidYMid meet"><defs><linearGradient id="gG16" x1="0" y1="0" x2="0" y2="1"><stop offset="0" stop-color="#c4c4c4"/><stop offset="1" stop-color="#6e6e6e"/></linearGradient></defs><rect x="1" y="0.8" width="13.5" height="15" fill="url(#gG16)" stroke="#555" stroke-width="0.6"/><rect x="0.7" y="0.5" width="2.6" height="15.6" fill="#0a0a0a"/><path d="M3.5,14.8 H14.2" stroke="#eee" stroke-width="0.8"/><circle cx="8" cy="8" r="3.4" fill="#2e2e2e"/><path d="M6.5,7 C7.5,5.8 9.5,6 10,7.5" stroke="#999" stroke-width="0.9" fill="none"/></svg>
<span class="lb" style="left:40.5px">Guide</span>
</div>
<div class="ti" style="left:0;top:463px;width:248px">
<svg class="ic" style="left:20px;" width="16" height="16" viewBox="824 79 25 23" preserveAspectRatio="xMidYMid meet"><defs><linearGradient id="gHat" x1="0" x2="1"><stop offset="0" stop-color="#111"/><stop offset="0.5" stop-color="#777"/><stop offset="1" stop-color="#111"/></linearGradient></defs>
<path d="M828.3,90.5 V98.5 C828.3,101.5 845,101.5 845,98.5 V90.5Z" fill="url(#gHat)"/><path d="M828.3,91 C833,92.5 840,92.5 845,91" stroke="#ccc" stroke-width="0.9" fill="none"/>
<ellipse cx="836.8" cy="86.3" rx="11.6" ry="3.8" transform="rotate(-10 836.8 86.3)" fill="#1e1e1e"/>
<path d="M829,89 L847,80.8" stroke="#111" stroke-width="1.8"/><path d="M829,89 L831.5,87.8 M845,81.7 L847.2,80.7" stroke="#eee" stroke-width="1.2"/></svg>
<span class="lb" style="left:40.5px">Wizard</span>
</div>
<div class="ti" style="left:0;top:485px;width:248px">
<svg class="ic" style="left:20px;top:3px" width="16" height="16" viewBox="0 0 16 16" preserveAspectRatio="xMidYMid meet"><defs><linearGradient id="gTop" x1="0" y1="0" x2="0" y2="1"><stop offset="0" stop-color="#8a8a8a"/><stop offset="0.45" stop-color="#3a3a3a"/><stop offset="1" stop-color="#111"/></linearGradient></defs><rect x="0.3" y="2.8" width="15.4" height="13.2" rx="1" fill="url(#gTop)" stroke="#222" stroke-width="0.6"/><path d="M1.5,11 H3.5 L4.5,8 L5.5,12.5 L6.5,6.5 L7.8,12 L9,8.5 L10,11 L11,9.5 L12,11 H14.5" stroke="#e8f4f8" stroke-width="0.9" fill="none"/><path d="M1.5,14 H14.5" stroke="#777" stroke-width="0.6"/></svg>
<span class="lb" style="left:40.5px">Display System Processes</span>
</div>
<div class="ti" style="left:0;top:507px;width:248px">
<svg class="ic" style="left:20px;top:3px" width="16" height="16" viewBox="0 0 16 16" preserveAspectRatio="xMidYMid meet"><defs><linearGradient id="gSh" x1="0" y1="0" x2="0" y2="1"><stop offset="0" stop-color="#8a8a8a"/><stop offset="0.45" stop-color="#3a3a3a"/><stop offset="1" stop-color="#111"/></linearGradient></defs><rect x="0.3" y="2.3" width="15.4" height="13.4" rx="1" fill="url(#gSh)" stroke="#222" stroke-width="0.6"/><text x="8" y="10.5" font-size="6.8" font-weight="bold" fill="#fff" text-anchor="middle" font-family="Liberation Sans">C:/&gt;</text><path d="M1.5,13.5 H14.5" stroke="#888" stroke-width="0.7"/></svg>
<span class="lb" style="left:40.5px">Shell</span>
</div>
<div class="ti" style="left:0;top:529px;width:248px">
<svg class="ic" style="left:20px;top:3px" width="16" height="16" viewBox="0 0 16 16" preserveAspectRatio="xMidYMid meet"><defs><linearGradient id="gX" x1="0" y1="0" x2="1" y2="1"><stop offset="0" stop-color="#6a6a6a"/><stop offset="0.5" stop-color="#2a2a2a"/><stop offset="1" stop-color="#111"/></linearGradient></defs><path d="M0.5,3.5 L3.5,0.5 L8,5 L12.5,0.5 L15.5,3.5 L11,8 L15.5,12.5 L12.5,15.5 L8,11 L3.5,15.5 L0.5,12.5 L5,8Z" fill="url(#gX)"/></svg>
<span class="lb" style="left:40.5px">Log Out</span>
</div>
<div class="ti" style="left:0;top:551px;width:248px">
<svg class="ic" style="left:20px;top:3px" width="16" height="16" viewBox="0 0 16 16" preserveAspectRatio="xMidYMid meet"><g stroke="#2a2a2a" stroke-width="1.6"><path d="M8,0.5 V4.5 M8,11.5 V15.5 M0.5,8 H4.5 M11.5,8 H15.5 M2.7,2.7 L5.5,5.5 M10.5,10.5 L13.3,13.3 M2.7,13.3 L5.5,10.5 M10.5,5.5 L13.3,2.7"/></g></svg>
<span class="lb" style="left:40.5px">Reboot</span>
</div>
<div class="ti" style="left:0;top:573px;width:248px">
<svg class="ic" style="left:20px;top:3px" width="16" height="16" viewBox="0 0 16 16" preserveAspectRatio="xMidYMid meet"><rect x="5" y="0" width="6" height="3" fill="#333"/></svg>
<span class="lb" style="left:40.5px">Shutdown</span>
</div>
<div id="tsb" class="a"></div><div id="thumb" class="a"></div>
<svg class="a" style="left:254px;top:7px" width="8" height="5" viewBox="0 0 8 5"><path d="M0,5 L4,0.5 L8,5Z" fill="#333"/></svg>
<svg class="a" style="left:254px;top:567px" width="8" height="4" viewBox="0 0 8 4"><path d="M0,0 L4,3.5 L8,0Z" fill="#333"/></svg>
<div class="a" style="left:253px;top:276px;width:7px;height:1px;background:#444"></div><div class="a" style="left:253px;top:279px;width:7px;height:1px;background:#444"></div><div class="a" style="left:253px;top:282px;width:7px;height:1px;background:#444"></div>
</div>
<div id="main" class="a"></div>
<div id="tab" class="a"></div><div class="t" style="left:294px;top:137px;letter-spacing:0.3px">Storage</div>
<div id="volbtn" class="a"></div>
<div class="t sub" style="left:292px;color:#111">Volumes</div>
<div class="t sub" style="left:355px;">Periodic Snapshot Tasks</div>
<div class="t sub" style="left:503px;">Replication Tasks</div>
<div class="t sub" style="left:622px;">Scrubs</div>
<div class="t sub" style="left:681px;">Snapshots</div>
<div class="t sub" style="left:749px;">VMware-Snapshot</div>
<div class="a" style="left:281px;top:185px;width:888px;height:1px;background:#b9c0c8"></div>
<div class="btn" style="left:282px;width:100px">Volume Manager</div>
<div class="btn" style="left:391px;width:77px">Import Disk</div>
<div class="btn" style="left:476px;width:93px">Import Volume</div>
<div class="btn" style="left:577px;width:72px">View Disks</div>
<div id="grid" class="a">
<div id="gl2" class="a"></div><div id="ghdr" class="a">
<div class="hc" style="left:0px;width:125px"><span style=left:4.7px>Name</span></div>
<div class="hc" style="left:125px;width:125px"><span>Used</span></div>
<div class="hc" style="left:250px;width:124px"><span>Available</span></div>
<div class="hc" style="left:374px;width:124px"><span>Compression</span></div>
<div class="hc" style="left:498px;width:124px"><span>Compression Ratio</span></div>
<div class="hc" style="left:622px;width:125px"><span>Status</span></div>
<div class="hc" style="left:747px;width:124px"><span>Readonly</span></div>
</div>
<div class="row" style="top:20px;">
<div class="cell" style="left:0px;width:125px;overflow:hidden"><svg class="a" style="left:8.5px;top:8px" width="6" height="6" viewBox="0 0 6 6"><path d="M0,6 L6,0 V6Z" fill="#222"/></svg><span style="left:20.5px">farm</span></div>
<div class="cell" style="left:125px;width:125px"><span>6.4 TiB (59%)</span></div>
<div class="cell" style="left:250px;width:124px"><span>4.5 TiB</span></div>
<div class="cell" style="left:374px;width:124px"><span>-</span></div>
<div class="cell" style="left:498px;width:124px"><span>-</span></div>
<div class="cell" style="left:622px;width:125px"><span>HEALTHY</span></div>
<div class="cell" style="left:747px;width:124px"><span></span></div>
</div>
<div class="row" style="top:43px;">
<div class="cell" style="left:0px;width:125px;overflow:hidden"><svg class="a" style="left:17.5px;top:8px" width="6" height="6" viewBox="0 0 6 6"><path d="M0,6 L6,0 V6Z" fill="#222"/></svg><span style="left:29.5px">farm</span></div>
<div class="cell" style="left:125px;width:125px"><span>4.3 TiB (60%)</span></div>
<div class="cell" style="left:250px;width:124px"><span>2.7 TiB</span></div>
<div class="cell" style="left:374px;width:124px"><span>lz4</span></div>
<div class="cell" style="left:498px;width:124px"><span>1.02x</span></div>
<div class="cell" style="left:622px;width:125px"><span>-</span></div>
<div class="cell" style="left:747px;width:124px"><span>inherit (off)</span></div>
</div>
<div class="row" style="top:66px;">
<div class="cell" style="left:0px;width:125px;overflow:hidden"><span style="left:38.5px">Removable_Disk</span></div>
<div class="cell" style="left:125px;width:125px"><span>305.5 GiB (9%)</span></div>
<div class="cell" style="left:250px;width:124px"><span>2.7 TiB</span></div>
<div class="cell" style="left:374px;width:124px"><span>inherit (lz4)</span></div>
<div class="cell" style="left:498px;width:124px"><span>1.01x</span></div>
<div class="cell" style="left:622px;width:125px"><span>-</span></div>
<div class="cell" style="left:747px;width:124px"><span>inherit (off)</span></div>
</div>
<div class="row" style="top:89px;">
<div class="cell" style="left:0px;width:125px;overflow:hidden"><span style="left:38.5px">VM</span></div>
<div class="cell" style="left:125px;width:125px"><span>97.9 GiB (3%)</span></div>
<div class="cell" style="left:250px;width:124px"><span>2.7 TiB</span></div>
<div class="cell" style="left:374px;width:124px"><span>inherit (lz4)</span></div>
<div class="cell" style="left:498px;width:124px"><span>1.73x</span></div>
<div class="cell" style="left:622px;width:125px"><span>-</span></div>
<div class="cell" style="left:747px;width:124px"><span>inherit (off)</span></div>
</div>
<div class="row" style="top:112px;">
<div class="cell" style="left:0px;width:125px;overflow:hidden"><span style="left:38.5px">backups</span></div>
<div class="cell" style="left:125px;width:125px"><span>3.3 TiB (54%)</span></div>
<div class="cell" style="left:250px;width:124px"><span>2.7 TiB</span></div>
<div class="cell" style="left:374px;width:124px"><span>off</span></div>
<div class="cell" style="left:498px;width:124px"><span>1.00x</span></div>
<div class="cell" style="left:622px;width:125px"><span>-</span></div>
<div class="cell" style="left:747px;width:124px"><span>inherit (off)</span></div>
</div>
<div class="row" style="top:135px;">
<div class="cell" style="left:0px;width:125px;overflow:hidden"><span style="left:38.5px">benchmark</span></div>
<div class="cell" style="left:125px;width:125px"><span>935.1 KiB (0%)</span></div>
<div class="cell" style="left:250px;width:124px"><span>2.7 TiB</span></div>
<div class="cell" style="left:374px;width:124px"><span>off</span></div>
<div class="cell" style="left:498px;width:124px"><span>1.00x</span></div>
<div class="cell" style="left:622px;width:125px"><span>-</span></div>
<div class="cell" style="left:747px;width:124px"><span>inherit (off)</span></div>
</div>
<div class="row" style="top:158px;">
<div class="cell" style="left:0px;width:125px;overflow:hidden"><span style="left:38.5px">data</span></div>
<div class="cell" style="left:125px;width:125px"><span>162.6 GiB (5%)</span></div>
<div class="cell" style="left:250px;width:124px"><span>2.7 TiB</span></div>
<div class="cell" style="left:374px;width:124px"><span>lz4</span></div>
<div class="cell" style="left:498px;width:124px"><span>1.11x</span></div>
<div class="cell" style="left:622px;width:125px"><span>-</span></div>
<div class="cell" style="left:747px;width:124px"><span>inherit (off)</span></div>
</div>
<div class="row" style="top:181px;background:#eef4fb;">
<div class="cell" style="left:0px;width:125px;overflow:hidden"><span style="left:38.5px">ftp</span></div>
<div class="cell" style="left:125px;width:125px"><span>7.5 GiB (0%)</span></div>
<div class="cell" style="left:250px;width:124px"><span>2.7 TiB</span></div>
<div class="cell" style="left:374px;width:124px"><span>lz4</span></div>
<div class="cell" style="left:498px;width:124px"><span>1.01x</span></div>
<div class="cell" style="left:622px;width:125px"><span>-</span></div>
<div class="cell" style="left:747px;width:124px"><span>inherit (off)</span></div>
</div>
<div class="row" style="top:204px;">
<div class="cell" style="left:0px;width:125px;overflow:hidden"><span style="left:38.5px">iTunes</span></div>
<div class="cell" style="left:125px;width:125px"><span>37.7 GiB (1%)</span></div>
<div class="cell" style="left:250px;width:124px"><span>2.7 TiB</span></div>
<div class="cell" style="left:374px;width:124px"><span>inherit (lz4)</span></div>
<div class="cell" style="left:498px;width:124px"><span>1.01x</span></div>
<div class="cell" style="left:622px;width:125px"><span>-</span></div>
<div class="cell" style="left:747px;width:124px"><span>inherit (off)</span></div>
</div>
<div class="row" style="top:227px;">
<div class="cell" style="left:0px;width:125px;overflow:hidden"><svg class="a" style="left:26.5px;top:8px" width="6" height="6" viewBox="0 0 6 6"><path d="M0,6 L6,0 V6Z" fill="#222"/></svg><span style="left:38.5px">jails</span></div>
<div class="cell" style="left:125px;width:125px"><span>5.2 GiB (0%)</span></div>
<div class="cell" style="left:250px;width:124px"><span>2.7 TiB</span></div>
<div class="cell" style="left:374px;width:124px"><span>inherit (lz4)</span></div>
<div class="cell" style="left:498px;width:124px"><span>1.62x</span></div>
<div class="cell" style="left:622px;width:125px"><span>-</span></div>
<div class="cell" style="left:747px;width:124px"><span>inherit (off)</span></div>
</div>
<div class="row" style="top:250px;">
<div class="cell" style="left:0px;width:125px;overflow:hidden"><span style="left:47.5px">jails/.warden-template</span></div>
<div class="cell" style="left:125px;width:125px"><span>3.2 GiB (0%)</span></div>
<div class="cell" style="left:250px;width:124px"><span>2.7 TiB</span></div>
<div class="cell" style="left:374px;width:124px"><span>inherit (lz4)</span></div>
<div class="cell" style="left:498px;width:124px"><span>1.88x</span></div>
<div class="cell" style="left:622px;width:125px"><span>-</span></div>
<div class="cell" style="left:747px;width:124px"><span>inherit (off)</span></div>
</div>
<div class="row" style="top:273px;">
<div class="cell" style="left:0px;width:125px;overflow:hidden"><span style="left:47.5px">jails/MiniDLNA</span></div>
<div class="cell" style="left:125px;width:125px"><span>199.4 MiB (0%)</span></div>
<div class="cell" style="left:250px;width:124px"><span>2.7 TiB</span></div>
<div class="cell" style="left:374px;width:124px"><span>inherit (lz4)</span></div>
<div class="cell" style="left:498px;width:124px"><span>1.72x</span></div>
<div class="cell" style="left:622px;width:125px"><span>-</span></div>
<div class="cell" style="left:747px;width:124px"><span>inherit (off)</span></div>
</div>
<div class="row" style="top:296px;">
<div class="cell" style="left:0px;width:125px;overflow:hidden"><span style="left:47.5px">jails/plex</span></div>
<div class="cell" style="left:125px;width:125px"><span>1.8 GiB (0%)</span></div>
<div class="cell" style="left:250px;width:124px"><span>2.7 TiB</span></div>
<div class="cell" style="left:374px;width:124px"><span>inherit (lz4)</span></div>
<div class="cell" style="left:498px;width:124px"><span>1.44x</span></div>
<div class="cell" style="left:622px;width:125px"><span>-</span></div>
<div class="cell" style="left:747px;width:124px"><span>inherit (off)</span></div>
</div>
<div class="row" style="top:319px;">
<div class="cell" style="left:0px;width:125px;overflow:hidden"><span style="left:38.5px">madyson</span></div>
<div class="cell" style="left:125px;width:125px"><span>55.8 GiB (1%)</span></div>
<div class="cell" style="left:250px;width:124px"><span>2.7 TiB</span></div>
<div class="cell" style="left:374px;width:124px"><span>inherit (lz4)</span></div>
<div class="cell" style="left:498px;width:124px"><span>1.01x</span></div>
<div class="cell" style="left:622px;width:125px"><span>-</span></div>
<div class="cell" style="left:747px;width:124px"><span>inherit (off)</span></div>
</div>
<div class="row" style="top:342px;background:linear-gradient(#e7f1fb,#d9e8f7);">
<div class="cell" style="left:0px;width:125px;overflow:hidden"><span style="left:38.5px">movies</span></div>
<div class="cell" style="left:125px;width:125px"><span>259.8 GiB (8%)</span></div>
<div class="cell" style="left:250px;width:124px"><span>2.7 TiB</span></div>
<div class="cell" style="left:374px;width:124px"><span>lz4</span></div>
<div class="cell" style="left:498px;width:124px"><span>1.00x</span></div>
<div class="cell" style="left:622px;width:125px"><span>-</span></div>
<div class="cell" style="left:747px;width:124px"><span>inherit (off)</span></div>
</div>
<div class="row" style="top:365px;">
<div class="cell" style="left:0px;width:125px;overflow:hidden"><span style="left:38.5px">music</span></div>
<div class="cell" style="left:125px;width:125px"><span>42.1 GiB (1%)</span></div>
<div class="cell" style="left:250px;width:124px"><span>2.7 TiB</span></div>
<div class="cell" style="left:374px;width:124px"><span>lz4</span></div>
<div class="cell" style="left:498px;width:124px"><span>1.01x</span></div>
<div class="cell" style="left:622px;width:125px"><span>-</span></div>
<div class="cell" style="left:747px;width:124px"><span>inherit (off)</span></div>
</div>
<div class="row" style="top:388px;">
<div class="cell" style="left:0px;width:125px;overflow:hidden"><span style="left:38.5px">photos</span></div>
<div class="cell" style="left:125px;width:125px"><span>51.8 GiB (1%)</span></div>
<div class="cell" style="left:250px;width:124px"><span>2.7 TiB</span></div>
<div class="cell" style="left:374px;width:124px"><span>lz4</span></div>
<div class="cell" style="left:498px;width:124px"><span>1.03x</span></div>
<div class="cell" style="left:622px;width:125px"><span>-</span></div>
<div class="cell" style="left:747px;width:124px"><span>inherit (off)</span></div>
</div>
<div class="row" style="top:411px;">
<div class="cell" style="left:0px;width:125px;overflow:hidden"><span style="left:38.5px">redhat</span></div>
<div class="cell" style="left:125px;width:125px"><span>287.7 KiB (0%)</span></div>
<div class="cell" style="left:250px;width:124px"><span>2.7 TiB</span></div>
<div class="cell" style="left:374px;width:124px"><span>inherit (lz4)</span></div>
<div class="cell" style="left:498px;width:124px"><span>1.00x</span></div>
<div class="cell" style="left:622px;width:125px"><span>-</span></div>
<div class="cell" style="left:747px;width:124px"><span>inherit (off)</span></div>
</div>
<div class="a" style="left:872px;top:20px;width:17px;height:436px;background:linear-gradient(90deg,#f4f4f4,#e9e9e9);border-left:1px solid #e6e6e6"></div>
<svg class="a" style="left:878px;top:26px" width="8" height="5" viewBox="0 0 8 5"><path d="M0,5 L4,0.5 L8,5Z" fill="#8a8a8a"/></svg>
<svg class="a" style="left:878px;top:446px" width="8" height="4" viewBox="0 0 8 4"><path d="M0,0 L4,3.5 L8,0Z" fill="#8a8a8a"/></svg>
</div>
<div class="bb" style="left:283px"></div>
<div class="bb" style="left:324px"></div>
<div class="bb" style="left:364px"></div>
<div class="bb" style="left:404px"></div>
<div class="bb" style="left:445px"></div>
<div class="bb" style="left:485px"></div>
<svg class="a" style="left:283px;top:707px" width="240" height="36" viewBox="283 707 240 36">
<defs><linearGradient id="silv" x1="0" x2="1"><stop offset="0" stop-color="#8a8a8a"/><stop offset="0.45" stop-color="#f6f6f6"/><stop offset="0.7" stop-color="#d0d0d0"/><stop offset="1" stop-color="#7a7a7a"/></linearGradient></defs>
<ellipse cx="299" cy="730.8" rx="6" ry="1.5" fill="#1e1e1e"/>
<rect x="293.3" y="720" width="11.4" height="10.5" rx="1.5" fill="url(#silv)"/><path d="M293.3,724.3 H304.7 M293.3,727.8 H304.7" stroke="#3a3a3a" stroke-width="1"/><path d="M297,724.3 H301 M297,727.8 H301" stroke="#111" stroke-width="1.2"/>
<circle cx="300.3" cy="717" r="2.4" fill="#fff" stroke="#0a0a0a" stroke-width="2"/><rect x="302.4" y="715.7" width="7.8" height="2.7" fill="#0a0a0a"/><rect x="307.5" y="718" width="1.5" height="1.2" fill="#0a0a0a"/>
<rect x="333.5" y="718.5" width="13" height="13" fill="#f5f5f5" stroke="#c8c8c8" stroke-width="0.6"/><rect x="335" y="720" width="9.7" height="8.3" fill="#1d1715"/><rect x="334" y="729" width="12" height="2.5" fill="#d4d4d4"/>
<path d="M348,714 V720 M345,717 H351" stroke="#1b2838" stroke-width="2.2"/>
<rect x="373" y="718.3" width="13.3" height="5.4" fill="#111"/><rect x="373.3" y="723.7" width="12.8" height="8" fill="#fff" stroke="#555" stroke-width="0.7"/><path d="M377.5,723.7 V731.7 M381.8,723.7 V731.7 M373.3,727.6 H386.1" stroke="#555" stroke-width="0.7"/>
<path d="M384.5,715 L390.3,721 M390.3,715 L384.5,721" stroke="#e2122c" stroke-width="2.8"/>
<path d="M419.5,722.5 L427,730.8" stroke="#5b6068" stroke-width="3.6" stroke-linecap="round"/><circle cx="417.5" cy="721" r="3.8" fill="#5b6068"/><path d="M415,716.5 L418,719.5 L415.5,722 L412.5,719Z" fill="#cfe0f2"/>
<rect x="454" y="718.3" width="13.3" height="5.4" fill="#111"/><rect x="454.3" y="723.7" width="12.8" height="8" fill="#fff" stroke="#555" stroke-width="0.7"/><path d="M458.5,723.7 V731.7 M462.8,723.7 V731.7 M454.3,727.6 H467.1" stroke="#555" stroke-width="0.7"/>
<path d="M470,714 V720 M467,717 H473" stroke="#1b2838" stroke-width="2.2"/>
<rect x="494" y="714" width="17.7" height="6.3" fill="#111"/><circle cx="497" cy="717.3" r="2.2" fill="#123" stroke="#2ab3c6" stroke-width="1.1"/>
<rect x="494.3" y="720.3" width="17.2" height="11.4" fill="#fff" stroke="#666" stroke-width="0.6"/><path d="M494.3,726.3 H511.5" stroke="#666" stroke-width="0.6"/>
<ellipse cx="503" cy="730.8" rx="5.5" ry="1.2" fill="#222"/><rect x="498" y="721" width="10" height="9.5" rx="1.5" fill="url(#silv)"/><path d="M498,724.6 H508 M498,727.8 H508" stroke="#333" stroke-width="0.9"/>
</svg>
<div class="a" style="left:276px;top:429px;width:1px;height:21px;background:#c9c9c9"></div>
<div id="bstrip" class="a"></div><div id="bstrip2" class="a"></div>
</body></html>
